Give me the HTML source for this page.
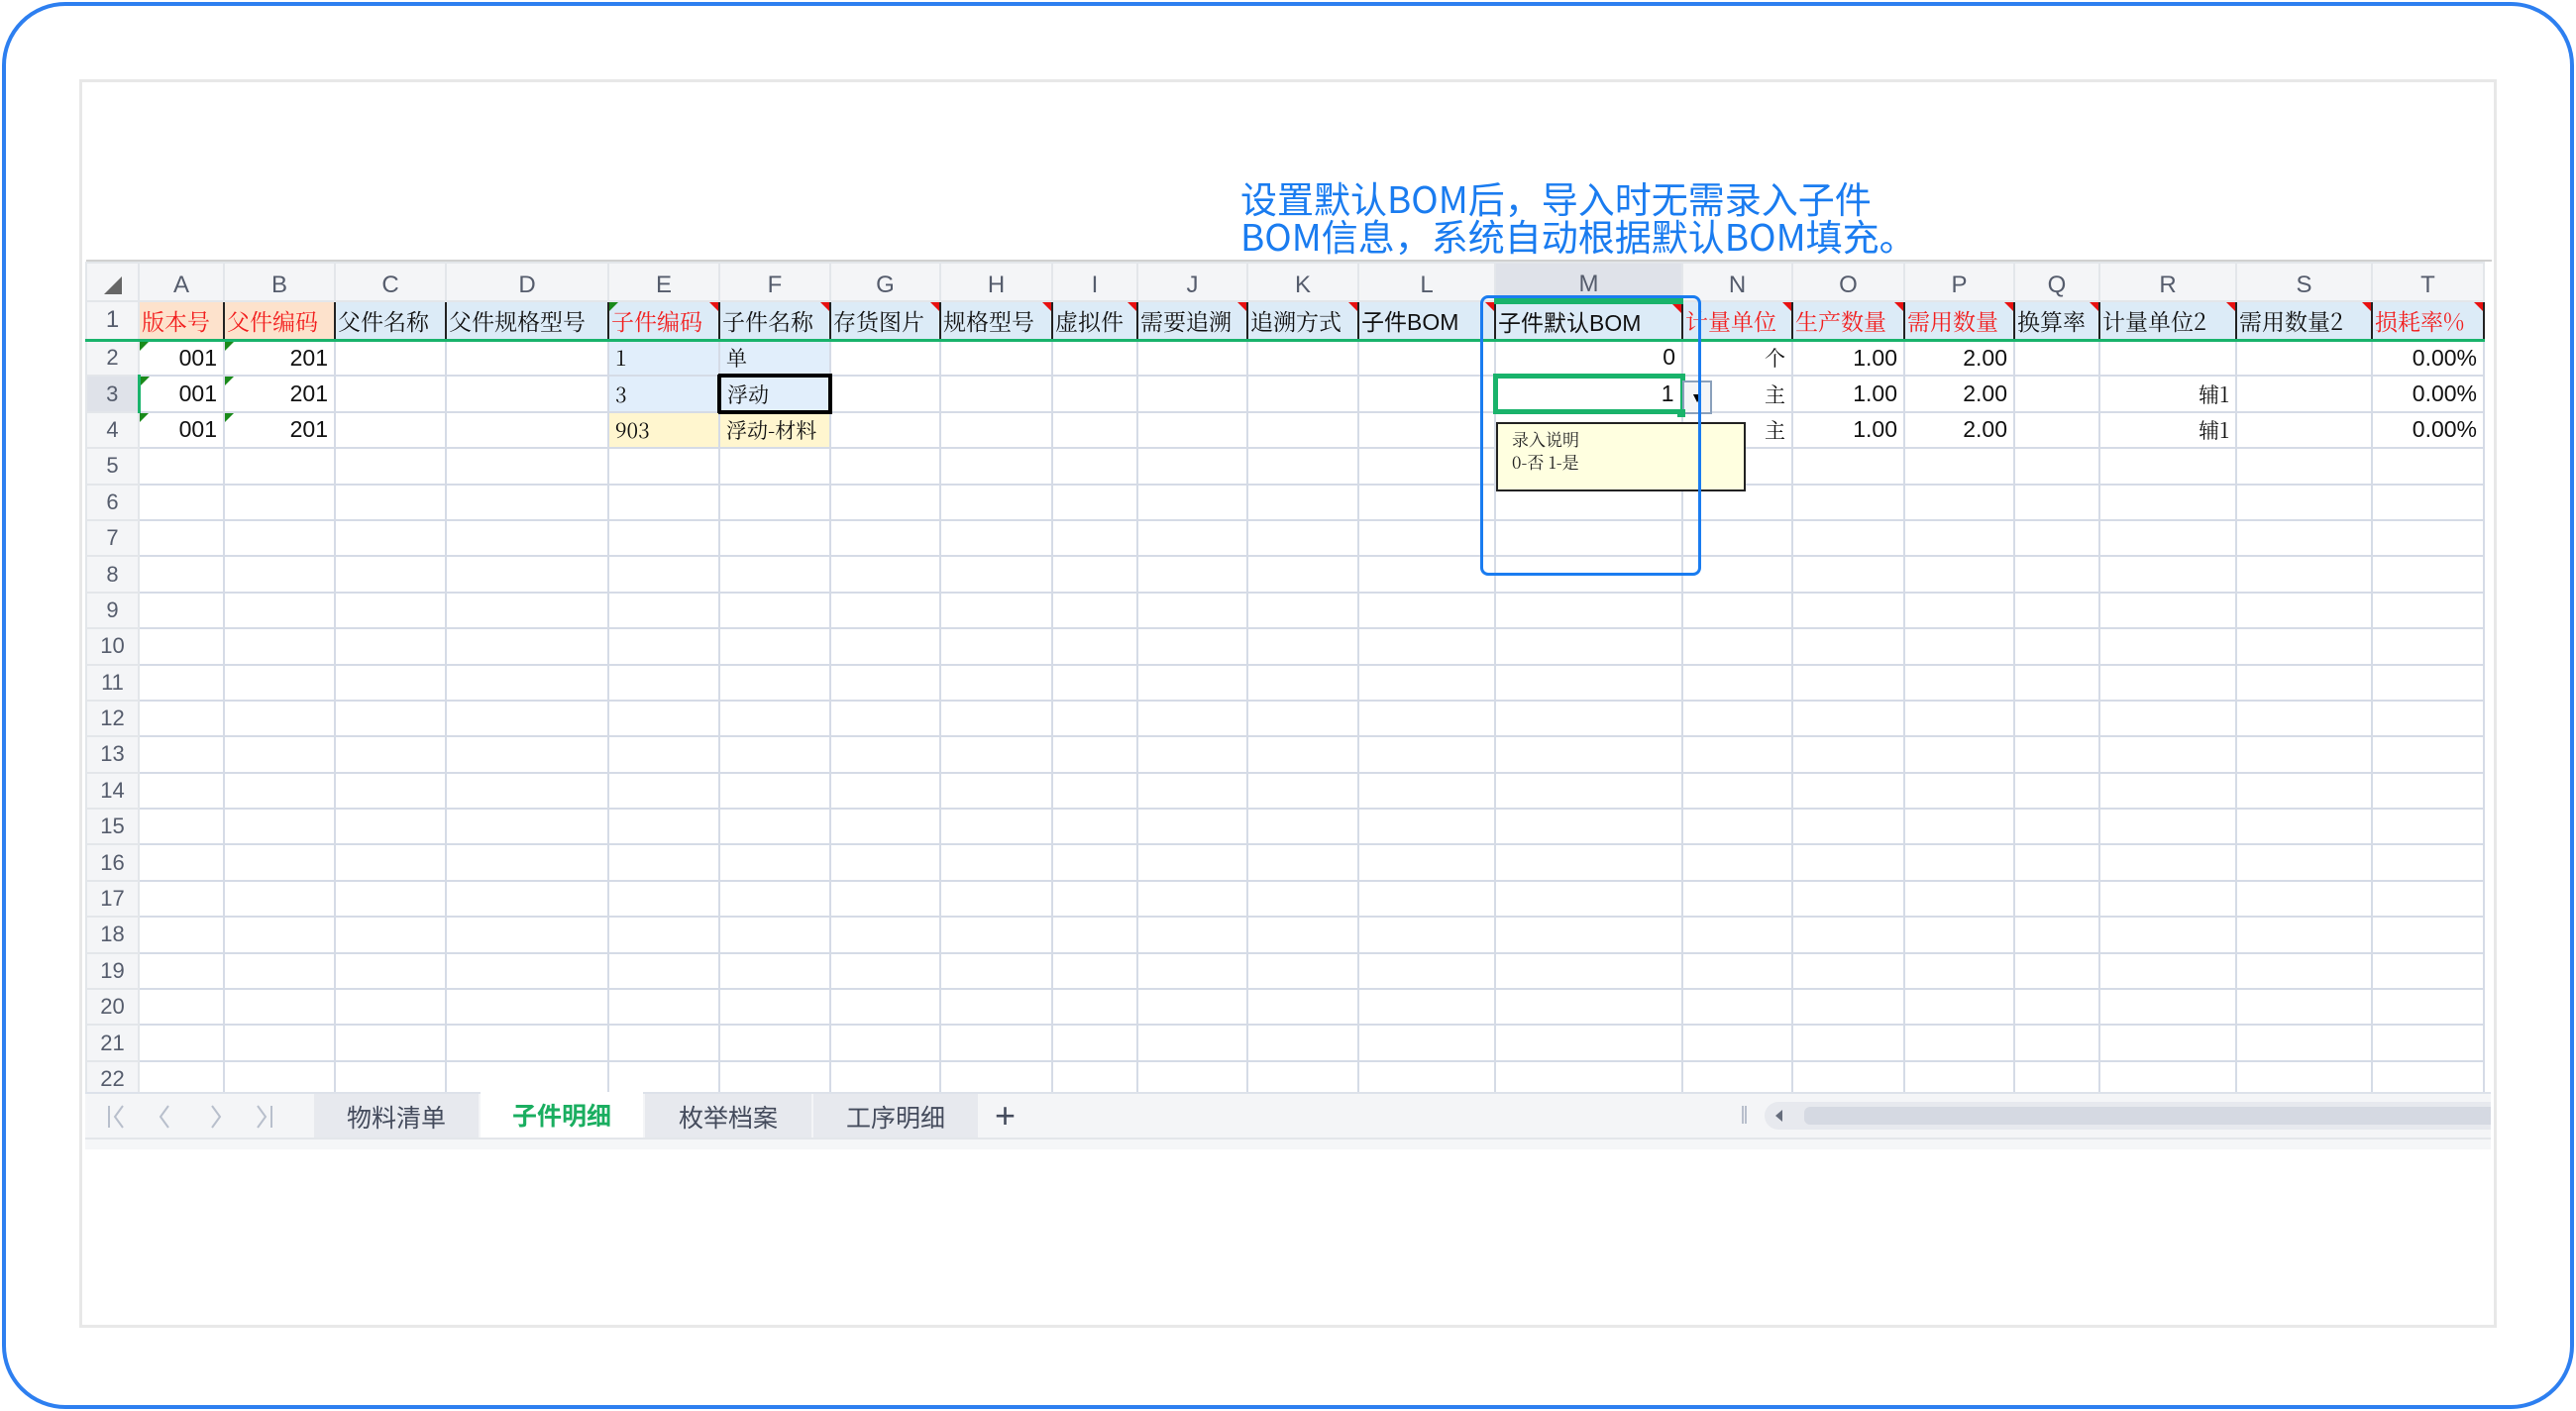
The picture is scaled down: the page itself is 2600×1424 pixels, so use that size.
<!DOCTYPE html>
<html><head><meta charset="utf-8"><style>
*{box-sizing:border-box;margin:0;padding:0}
body{width:2600px;height:1424px;background:#fff;position:relative;overflow:hidden;font-family:"Liberation Sans","Noto Sans CJK SC",sans-serif}
.outer{position:absolute;left:2px;top:2px;width:2596px;height:1420px;border:4px solid #2d7ff0;border-radius:64px}
.panel{position:absolute;left:80px;top:80px;width:2440px;height:1260px;border:3px solid #e8e8e8;background:#fff}
.title{position:absolute;left:1252px;top:180px;color:#1a7cf0;font-size:37px;line-height:38px;font-family:"Noto Sans CJK SC",sans-serif;letter-spacing:0}
table{position:absolute;left:86px;top:264px;border-collapse:collapse;table-layout:fixed}
td{border:2px solid #d5dbe6;font-size:23px;color:#111;padding:0 6px;white-space:nowrap;overflow:hidden;position:relative}
tr.ch td{background:#f4f5f7;color:#555c6c;text-align:center;height:39px;border-color:#e3e6ea;font-size:24px;padding-top:6px}
tr.ch td.sel{background:#dfe2e9}
tr.h1 td{background:#dcebf7;font-family:"Noto Serif CJK SC",serif;height:39px;padding:0 2px;border-left:2px solid #222;border-right:2px solid #222;border-bottom:3px solid #19b36b;font-size:23px}
tr.h1 td.pe{background:#fde2cc}
tr.h1 td.rn{background:#f4f5f7;border-left-color:#e3e6ea;border-right-color:#e3e6ea;color:#555c6c;font-family:"Liberation Sans",sans-serif;text-align:center;font-size:24px}
.red{color:#f21d1d}
tr.r td{height:36.4px}
td.rn{background:#f4f5f7;color:#555c6c;text-align:center;border-color:#e3e6ea;font-size:22px}
.rt{text-align:right}
.se{font-family:"Noto Serif CJK SC",serif;font-size:21px}
.lb{background:#e1eefb}
.ye{background:#fff6cf}
.tri:after{content:"";position:absolute;right:0;top:0;border-top:9px solid #e81010;border-left:9px solid transparent}
.gtri:before{content:"";position:absolute;left:0;top:0;border-top:9px solid #1a8a1a;border-right:9px solid transparent}
.tabs{position:absolute;left:86px;top:1102px;width:2428px;height:46px;background:#f4f5f7;border-top:2px solid #dde2ea}
.tab{position:absolute;top:0;height:46px;background:#e7e9ee;color:#444b5c;font-size:25px;line-height:46px;text-align:center;font-family:"Noto Sans CJK SC",sans-serif}
.strip{position:absolute;left:86px;top:1148px;width:2428px;height:12px;background:#f5f6f8;border-top:2px solid #e3e6ea}
</style></head><body>
<div class="outer"></div>
<div class="panel"></div>
<div class="title">设置默认BOM后，导入时无需录入子件<br>BOM信息，系统自动根据默认BOM填充。</div>
<div style="position:absolute;left:87px;top:262px;width:2428px;height:2px;background:#d0d0d0"></div>
<table>
<colgroup><col style="width:53px"><col style="width:86px"><col style="width:112px"><col style="width:112px"><col style="width:164px"><col style="width:112px"><col style="width:112px"><col style="width:111px"><col style="width:113px"><col style="width:86px"><col style="width:111px"><col style="width:112px"><col style="width:138px"><col style="width:189px"><col style="width:111px"><col style="width:113px"><col style="width:111px"><col style="width:86px"><col style="width:138px"><col style="width:137px"><col style="width:113px"></colgroup>
<tr class="ch"><td><span style="display:inline-block;border-bottom:18px solid #666;border-left:18px solid transparent;vertical-align:middle"></span></td><td>A</td><td>B</td><td>C</td><td>D</td><td>E</td><td>F</td><td>G</td><td>H</td><td>I</td><td>J</td><td>K</td><td>L</td><td class="sel">M</td><td>N</td><td>O</td><td>P</td><td>Q</td><td>R</td><td>S</td><td>T</td></tr>
<tr class="h1"><td class="rn">1</td><td class="pe red">版本号</td><td class="pe red">父件编码</td><td>父件名称</td><td>父件规格型号</td><td class="red tri gtri">子件编码</td><td class="tri">子件名称</td><td class="tri">存货图片</td><td class="tri">规格型号</td><td class="tri">虚拟件</td><td class="tri">需要追溯</td><td class="tri">追溯方式</td><td class="tri" style="font-family:'Liberation Sans','Noto Sans CJK SC',sans-serif">子件BOM</td><td class="tri" style="border-top:6px solid #19b36b;font-family:'Liberation Sans','Noto Sans CJK SC',sans-serif">子件默认BOM</td><td class="red tri">计量单位</td><td class="red tri">生产数量</td><td class="red tri">需用数量</td><td class="tri">换算率</td><td class="tri">计量单位2</td><td class="tri">需用数量2</td><td class="red tri">损耗率%</td></tr>
<tr class="r"><td class="rn">2</td><td class="rt gtri">001</td><td class="rt gtri">201</td><td></td><td></td><td class="se lb">1</td><td class="se lb">单</td><td></td><td></td><td></td><td></td><td></td><td></td><td class="rt">0</td><td class="rt se">个</td><td class="rt">1.00</td><td class="rt">2.00</td><td></td><td></td><td></td><td class="rt">0.00%</td></tr>
<tr class="r"><td class="rn" style="background:#dfe2e9">3</td><td class="rt gtri" style="border-left:3px solid #19b36b">001</td><td class="rt gtri">201</td><td></td><td></td><td class="se lb">3</td><td class="se lb" style="border:4px solid #000">浮动</td><td></td><td></td><td></td><td></td><td></td><td></td><td class="rt" style="border:5px solid #19b36b">1</td><td class="rt se">主</td><td class="rt">1.00</td><td class="rt">2.00</td><td></td><td class="rt se">辅1</td><td></td><td class="rt">0.00%</td></tr>
<tr class="r"><td class="rn">4</td><td class="rt gtri">001</td><td class="rt gtri">201</td><td></td><td></td><td class="se ye">903</td><td class="se ye">浮动-材料</td><td></td><td></td><td></td><td></td><td></td><td></td><td></td><td class="rt se">主</td><td class="rt">1.00</td><td class="rt">2.00</td><td></td><td class="rt se">辅1</td><td></td><td class="rt">0.00%</td></tr>
<tr class="r"><td class="rn">5</td><td></td><td></td><td></td><td></td><td></td><td></td><td></td><td></td><td></td><td></td><td></td><td></td><td></td><td></td><td></td><td></td><td></td><td></td><td></td><td></td></tr>
<tr class="r"><td class="rn">6</td><td></td><td></td><td></td><td></td><td></td><td></td><td></td><td></td><td></td><td></td><td></td><td></td><td></td><td></td><td></td><td></td><td></td><td></td><td></td><td></td></tr>
<tr class="r"><td class="rn">7</td><td></td><td></td><td></td><td></td><td></td><td></td><td></td><td></td><td></td><td></td><td></td><td></td><td></td><td></td><td></td><td></td><td></td><td></td><td></td><td></td></tr>
<tr class="r"><td class="rn">8</td><td></td><td></td><td></td><td></td><td></td><td></td><td></td><td></td><td></td><td></td><td></td><td></td><td></td><td></td><td></td><td></td><td></td><td></td><td></td><td></td></tr>
<tr class="r"><td class="rn">9</td><td></td><td></td><td></td><td></td><td></td><td></td><td></td><td></td><td></td><td></td><td></td><td></td><td></td><td></td><td></td><td></td><td></td><td></td><td></td><td></td></tr>
<tr class="r"><td class="rn">10</td><td></td><td></td><td></td><td></td><td></td><td></td><td></td><td></td><td></td><td></td><td></td><td></td><td></td><td></td><td></td><td></td><td></td><td></td><td></td><td></td></tr>
<tr class="r"><td class="rn">11</td><td></td><td></td><td></td><td></td><td></td><td></td><td></td><td></td><td></td><td></td><td></td><td></td><td></td><td></td><td></td><td></td><td></td><td></td><td></td><td></td></tr>
<tr class="r"><td class="rn">12</td><td></td><td></td><td></td><td></td><td></td><td></td><td></td><td></td><td></td><td></td><td></td><td></td><td></td><td></td><td></td><td></td><td></td><td></td><td></td><td></td></tr>
<tr class="r"><td class="rn">13</td><td></td><td></td><td></td><td></td><td></td><td></td><td></td><td></td><td></td><td></td><td></td><td></td><td></td><td></td><td></td><td></td><td></td><td></td><td></td><td></td></tr>
<tr class="r"><td class="rn">14</td><td></td><td></td><td></td><td></td><td></td><td></td><td></td><td></td><td></td><td></td><td></td><td></td><td></td><td></td><td></td><td></td><td></td><td></td><td></td><td></td></tr>
<tr class="r"><td class="rn">15</td><td></td><td></td><td></td><td></td><td></td><td></td><td></td><td></td><td></td><td></td><td></td><td></td><td></td><td></td><td></td><td></td><td></td><td></td><td></td><td></td></tr>
<tr class="r"><td class="rn">16</td><td></td><td></td><td></td><td></td><td></td><td></td><td></td><td></td><td></td><td></td><td></td><td></td><td></td><td></td><td></td><td></td><td></td><td></td><td></td><td></td></tr>
<tr class="r"><td class="rn">17</td><td></td><td></td><td></td><td></td><td></td><td></td><td></td><td></td><td></td><td></td><td></td><td></td><td></td><td></td><td></td><td></td><td></td><td></td><td></td><td></td></tr>
<tr class="r"><td class="rn">18</td><td></td><td></td><td></td><td></td><td></td><td></td><td></td><td></td><td></td><td></td><td></td><td></td><td></td><td></td><td></td><td></td><td></td><td></td><td></td><td></td></tr>
<tr class="r"><td class="rn">19</td><td></td><td></td><td></td><td></td><td></td><td></td><td></td><td></td><td></td><td></td><td></td><td></td><td></td><td></td><td></td><td></td><td></td><td></td><td></td><td></td></tr>
<tr class="r"><td class="rn">20</td><td></td><td></td><td></td><td></td><td></td><td></td><td></td><td></td><td></td><td></td><td></td><td></td><td></td><td></td><td></td><td></td><td></td><td></td><td></td><td></td></tr>
<tr class="r"><td class="rn">21</td><td></td><td></td><td></td><td></td><td></td><td></td><td></td><td></td><td></td><td></td><td></td><td></td><td></td><td></td><td></td><td></td><td></td><td></td><td></td><td></td></tr>
<tr class="r"><td class="rn">22</td><td></td><td></td><td></td><td></td><td></td><td></td><td></td><td></td><td></td><td></td><td></td><td></td><td></td><td></td><td></td><td></td><td></td><td></td><td></td><td></td></tr>
</table>
<div style="position:absolute;left:1698px;top:384px;width:30px;height:34px;border:2px solid #8aa0bb;background:#f4f5f7;text-align:center;font-size:14px;line-height:30px;color:#000">▼</div>
<div style="position:absolute;left:1693px;top:413px;width:8px;height:8px;background:#19b36b"></div>
<div style="position:absolute;left:1510px;top:426px;width:252px;height:70px;background:#ffffe0;border:2px solid #222;font-family:'Noto Serif CJK SC',serif;font-size:17px;line-height:23px;padding:3px 14px;color:#222">录入说明<br>0-否 1-是</div>
<div style="position:absolute;left:1494px;top:298px;width:223px;height:283px;border:3px solid #1a7cf0;border-radius:8px"></div>
<div class="tabs">
<svg style="position:absolute;left:20px;top:8px" width="220" height="30" viewBox="0 0 220 30" fill="none" stroke="#b8bfcc" stroke-width="2">
<path d="M4 4V26M18 4L10 15L18 26"/>
<path d="M64 4L56 15L64 26"/>
<path d="M108 4L116 15L108 26"/>
<path d="M154 4L162 15L154 26M168 4V26"/>
</svg>
<div class="tab" style="left:231px;width:166px">物料清单</div>
<div class="tab" style="left:399px;width:164px;background:#fff;color:#1aae60;font-weight:bold;top:-2px;height:48px">子件明细</div>
<div class="tab" style="left:565px;width:168px">枚举档案</div>
<div class="tab" style="left:735px;width:166px">工序明细</div>
<div style="position:absolute;left:918px;top:0;font-size:36px;line-height:44px;color:#444b5c">+</div>
<div style="position:absolute;left:1672px;top:12px;width:5px;height:18px;border-left:2px solid #b8bfcc;border-right:2px solid #b8bfcc"></div>
<div style="position:absolute;left:1695px;top:8px;width:733px;height:28px;background:#e7e9ee;border-radius:14px 0 0 14px"></div>
<div style="position:absolute;left:1706px;top:16px;border-right:7px solid #666d7c;border-top:6px solid transparent;border-bottom:6px solid transparent"></div>
<div style="position:absolute;left:1735px;top:13px;width:693px;height:18px;background:#d5d9e2;border-radius:6px 0 0 6px"></div>
</div>
<div class="strip"></div>
</body></html>
